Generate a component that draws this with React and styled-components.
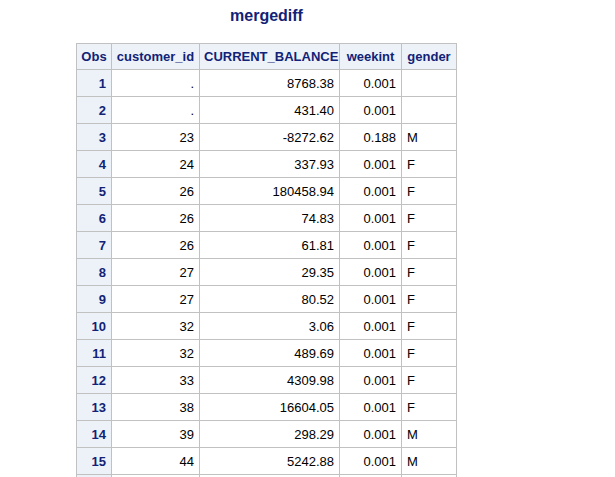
import React from 'react';
import styled, { createGlobalStyle } from 'styled-components';

// the 16th row only shows as a sliver of borders at the bottom edge
const rows = [
    [1, '.', '8768.38', '0.001', ''],
    [2, '.', '431.40', '0.001', ''],
    [3, '23', '-8272.62', '0.188', 'M'],
    [4, '24', '337.93', '0.001', 'F'],
    [5, '26', '180458.94', '0.001', 'F'],
    [6, '26', '74.83', '0.001', 'F'],
    [7, '26', '61.81', '0.001', 'F'],
    [8, '27', '29.35', '0.001', 'F'],
    [9, '27', '80.52', '0.001', 'F'],
    [10, '32', '3.06', '0.001', 'F'],
    [11, '32', '489.69', '0.001', 'F'],
    [12, '33', '4309.98', '0.001', 'F'],
    [13, '38', '16604.05', '0.001', 'F'],
    [14, '39', '298.29', '0.001', 'M'],
    [15, '44', '5242.88', '0.001', 'M'],
    ['', '', '', '', ''],
];

export default function App() {
    return (
        <>
            <GlobalStyle />
            <Page>
                <Output>
                    <Title>mergediff</Title>
                    <Table>
                        <colgroup>
                            <col style={{ width: 35 }} />
                            <col style={{ width: 88 }} />
                            <col style={{ width: 140 }} />
                            <col style={{ width: 62 }} />
                            <col style={{ width: 55 }} />
                        </colgroup>
                        <thead>
                            <tr>
                                <Head>Obs</Head>
                                <Head>customer_id</Head>
                                <Head>CURRENT_BALANCE</Head>
                                <Head>weekint</Head>
                                <Head>gender</Head>
                            </tr>
                        </thead>
                        <tbody>
                            {rows.map((r, i) => (
                                <tr key={i}>
                                    <RowHead>{r[0]}</RowHead>
                                    <Cell>{r[1]}</Cell>
                                    <Cell>{r[2]}</Cell>
                                    <Cell>{r[3]}</Cell>
                                    <Cell left>{r[4]}</Cell>
                                </tr>
                            ))}
                        </tbody>
                    </Table>
                </Output>
            </Page>
        </>
    );
}

// STYLES //

const GlobalStyle = createGlobalStyle`
    html, body {
        margin: 0;
        padding: 0;
        background: #fff;
        overflow: hidden;
    }
`;

const Page = styled.div`
    padding: 6px 0 0 76px;
    font-family: "Liberation Sans", Arial, sans-serif;
`;

const Output = styled.div`
    display: inline-block;
`;

const Title = styled.div`
    text-align: center;
    font-size: 16px;
    font-weight: bold;
    color: #112277;
    height: 20px;
    line-height: 20px;
    margin-bottom: 17px;
`;

const Table = styled.table`
    border-collapse: collapse;
    table-layout: fixed;
    width: 381px;
    border: 1px solid #c1c1c1;
    font-size: 13px;
`;

const Head = styled.th`
    height: 26px;
    padding: 0 4px;
    box-sizing: border-box;
    background: #edf2f9;
    color: #112277;
    font-weight: bold;
    text-align: center;
    border: 1px solid #c1c1c1;
    white-space: nowrap;
`;

const RowHead = styled.th`
    height: 26px;
    padding: 0 5px;
    background: #edf2f9;
    color: #112277;
    font-weight: bold;
    text-align: right;
    border: 1px solid #c1c1c1;
`;

const Cell = styled.td`
    height: 26px;
    padding: 0 5px;
    color: #000;
    text-align: ${p => (p.left ? 'left' : 'right')};
    border: 1px solid #c1c1c1;
    white-space: nowrap;
`;
